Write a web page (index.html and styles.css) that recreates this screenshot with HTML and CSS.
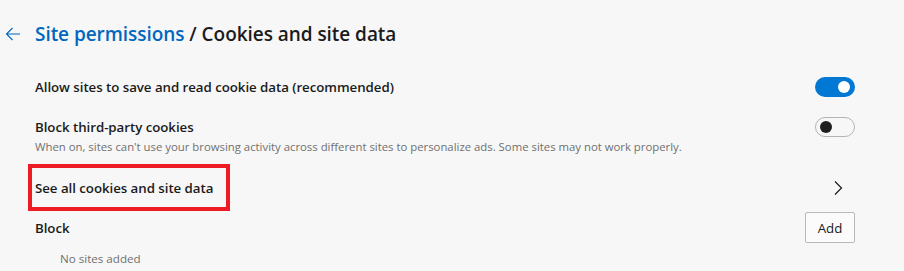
FILE: index.html
```html
<!DOCTYPE html>
<html lang="en">
<head>
<meta charset="utf-8">
<title>Cookies and site data</title>
<link rel="stylesheet" href="styles.css">
</head>
<body>
<div class="page">
  <header class="header">
    <button class="back" aria-label="Back">
      <svg width="16" height="16" viewBox="0 0 16 16"><path d="M15 8H1.5M7.5 2L1.5 8l6 6" fill="none" stroke="#0067c0" stroke-width="1.1"/></svg>
    </button>
    <h1 class="title"><a class="crumb" href="#">Site permissions</a> / Cookies and site data</h1>
  </header>

  <div class="rows">
    <div class="row row-allow">
      <div class="label">Allow sites to save and read cookie data (recommended)</div>
      <span class="toggle on"><span class="knob"></span></span>
    </div>

    <div class="row row-block3p">
      <div class="text">
        <div class="label">Block third-party cookies</div>
        <div class="desc">When on, sites can't use your browsing activity across different sites to personalize ads. Some sites may not work properly.</div>
      </div>
      <span class="toggle off"><span class="knob"></span></span>
    </div>

    <div class="row row-see">
      <div class="label">See all cookies and site data</div>
      <svg class="chev" width="10" height="16" viewBox="0 0 10 16"><path d="M2 1.5l6.5 6.5L2 14.5" fill="none" stroke="#1b1b1b" stroke-width="1.2"/></svg>
      <span class="highlight"></span>
    </div>

    <div class="row row-blocklist">
      <div class="label">Block</div>
      <button class="add">Add</button>
    </div>

    <div class="empty">No sites added</div>
  </div>
</div>
</body>
</html>
```
FILE: styles.css
```css
* { box-sizing: border-box; }
html, body { margin: 0; padding: 0; }
body {
  background: #f7f7f7;
  font-family: "Open Sans", "Noto Sans", sans-serif;
  color: #1b1b1b;
  width: 904px;
  height: 271px;
  overflow: hidden;
}
.page { padding: 20px 49px 0 0; }
.header {
  display: flex;
  align-items: center;
  height: 28px;
}
.back {
  border: 0;
  background: none;
  padding: 0;
  margin: 0 0 0 5px;
  width: 16px;
  height: 16px;
  display: flex;
}
.title {
  margin: 0 0 0 14px;
  font-size: 19px;
  font-weight: 600;
  color: #1b1b1b;
  letter-spacing: -0.05px;
}
.crumb { color: #0067c0; text-decoration: none; }

.rows { padding-left: 35px; margin-top: 29px; }
.row {
  display: flex;
  align-items: center;
  justify-content: space-between;
  position: relative;
}
.label { font-size: 13.3px; font-weight: 600; letter-spacing: -0.05px; }
.row-allow { height: 20px; }
.row-block3p { margin-top: 20px; align-items: flex-start; }
.row-block3p .label { line-height: 20px; }
.desc { font-size: 11.35px; color: #707070; margin-top: 2px; }

.toggle {
  width: 40px;
  height: 20px;
  border-radius: 10px;
  display: flex;
  align-items: center;
  flex: none;
}
.toggle.on { background: #0078d4; justify-content: flex-end; padding-right: 5px; }
.toggle.on .knob { width: 12px; height: 12px; border-radius: 50%; background: #fff; }
.toggle.off { border: 1px solid #b3b3b3; padding-left: 4px; background: #f7f7f7; }
.toggle.off .knob { width: 12px; height: 12px; border-radius: 50%; background: #1f1f1f; }

.row-see { height: 47px; margin-top: 10px; }
.chev { margin-right: 12px; }
.highlight {
  position: absolute;
  left: -7px;
  top: 0;
  width: 202px;
  height: 47px;
  border: 4px solid #ed1c24;
}

.row-blocklist { height: 33px; }
.add {
  width: 50px;
  height: 31px;
  border: 1px solid #b9b9b9;
  border-radius: 2px;
  background: #fbfbfb;
  font-family: inherit;
  font-size: 13.3px;
  color: #1b1b1b;
  padding: 0;
}
.empty { font-size: 11.6px; color: #707070; margin: 7px 0 0 25px; }
```
